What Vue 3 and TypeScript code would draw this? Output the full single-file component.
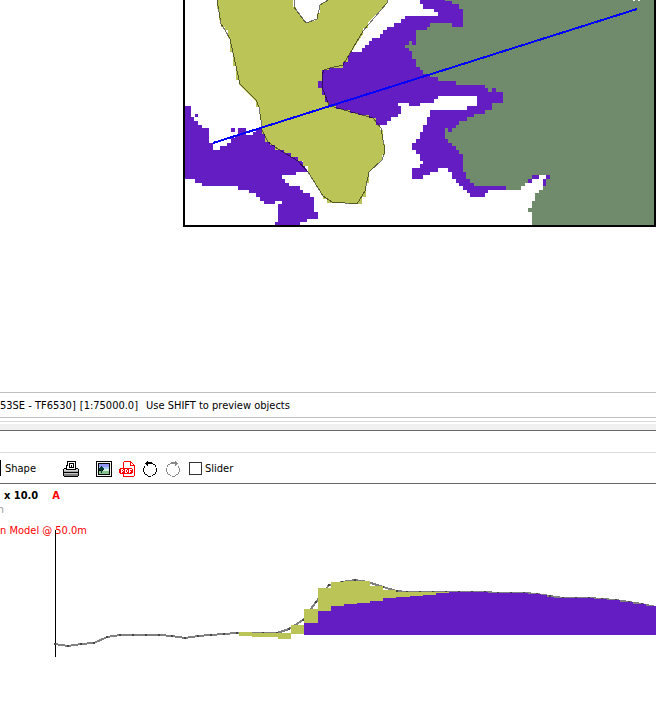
<script setup lang="ts">
import { ref } from 'vue'

type Point = [number, number]

const shape = ref(false)
const slider = ref(false)

const profile: Point[] = [
  [55, 644], [68, 646], [81, 644], [94, 643], [107, 637], [120, 635], [133, 635], [146, 635],
  [159, 635], [172, 636], [185, 638], [198, 636], [211, 635], [224, 634], [237, 633], [250, 633],
  [263, 633], [277, 633], [289, 629], [303, 620], [316, 602], [329, 585], [342, 582], [355, 580],
  [368, 582], [383, 587], [397, 591], [407, 592], [420, 592], [433, 592], [446, 592], [459, 592],
  [472, 592], [485, 592], [498, 593], [511, 593], [524, 593], [537, 594], [550, 596], [563, 598],
  [576, 598], [589, 598], [602, 599], [616, 600], [629, 602], [642, 604], [656, 607],
]
const profileLine = profile.map((p) => p.join(',')).join(' ')
</script>

<template>
  <main class="app">
    <section class="map-area">
      <div class="map-frame">
        <svg class="map" viewBox="185 0 469 225" preserveAspectRatio="xMinYMin slice" role="img" aria-label="Map">
          <g class="purple">
            <path d="M185 106H191V117H194V121H198V125H202V128H209V143H213V150H220V146H227V143H231V138H235V136H238V128H246V135H253V132H256V128H262L290 140L308 172H296V175H282V179H285V183H289V186H300V190H303V193H310V197H314V212H318V219H307V222H300V225H275V222H278V204H282V201H275V204H264V201H260V197H256V193H249V190H238V186H202V183H195V179H185Z" />
            <path d="M195 114h3v3h-3zM231 128h4v4h-4z" />
            <path d="M420 0V4H423V9H434V12H438V16H405V19H401V23H394V27H387V30H383V34H380V38H372V41H369V45H365V48H362V52H352L335 60L310 70V110L360 130L376 125H387V121H391V117H398V114H401V106H398V103H409V106H420V103H434V99H438V96H477V106H467V110H430V117H427V125H423V132H420V139H416V143H412V150H416V154H420V161H423V164H420V168H412V179H423V175H430V172H438V168H448V172H452V179H456V183H459V186H463V190H467V193H470V197H485V193H488V190H506V0Z" />
          </g>
          <path class="green" d="M445 0V1H452V4H459V9H463V27H452V23H430V27H427V30H416V45H412V41H409V45H405V48H409V51H412V59H416V67H420V70H423V74H430V77H438V81H456V85H485V88H488V92H492V88H496V92H503V103H492V110H485V114H474V117H467V121H459V125H456V128H452V132H448V128H445V139H448V143H452V146H456V150H459V154H463V172H466V179H470V183H474V186H506V190H521V186H525V183H528V179H532V175H550V179H546V186H543V190H539V193H535V201H532V208H528V212H532V225H654V0Z" />
          <path class="white" d="M633 0h2v1h-2zM638 0h2v1h-2z" />
          <path class="purple" d="M532 175h7v4h-7zM528 179h4v4h-4zM546 175h4v4h-4zM543 179h3v7h-3z" />
          <path class="olive" d="M217 0V9H219V20H221V27H225V30H228V38H230V52H233V66H236V80H239V85L256 101V107H260V120H262V134H265V142H270V145H275V150H284V153H291V157H298V161H303V166H308V172L323 196V199H327V203H340L357 204H362V197H366V183H369V172L382 160V155H385V144H383V130H380V125H376V118H369V115H358V113H350V110H343V109H336V106H329V102H325V95H322V88H318V81H322V70H329V68H343V62H348V57L363 34V28H368V23L387 3V0H328L320 5V13H317V20L306 23L296 10V7H293V0Z" />
          <g class="outline">
            <polyline points="217,0 221,24 225,30 230,39 240,84 256,100 259,107 261,120 262,130 268,142 278,149 298,161 308,172 323,196 332,202 357,204 365,191 369,172 382,160 385,151 381,128 373,118 337,108 329,105 325,95 322,87 322,75 324,70 330,68 343,65 363,31 387,3 387,0" />
            <polyline points="328,0 320,5 317,19 306,23 294,7 294,0" />
          </g>
          <path class="section-line" d="M213 143L637 9" />
        </svg>
      </div>
    </section>

    <footer class="status">
      <span class="grid-ref">53SE - TF6530]</span>
      <span class="scale">[1:75000.0]</span>
      <span>Use SHIFT to preview objects</span>
    </footer>
    <div class="splitter"></div>
    <div class="caption"></div>

    <nav class="toolbar">
      <label class="shape"><input v-model="shape" type="checkbox" /><span>Shape</span></label>
      <button class="print" type="button" aria-label="Print">
        <svg viewBox="0 0 16 16">
          <path fill="#000" d="M4 0h9v7h2v1h1v7h-1v1H1v-1H0V8h1V7h2V4h1z" />
          <path fill="#fff" d="M5 1h7v7H4V5h1z" />
          <path fill="#000" d="M6 2h5v5H6z" />
          <path fill="#fff" d="M7 3h3v3H7z" />
          <path fill="#000" d="M8 4h1v2H8z" />
          <path fill="#d4d4d4" d="M1 8h2v1h10V8h2v2H1z" />
          <path fill="#a8a8a8" d="M1 10h14v1H1z" />
          <path fill="#808080" d="M1 12h14v3H1z" />
          <path fill="#c8c8c8" d="M1 12h14v1H1z" />
        </svg>
      </button>
      <button class="picture" type="button" aria-label="Save image">
        <svg viewBox="0 0 16 16">
          <path fill="#000" d="M0 0h16v16H0z" />
          <path fill="#f4f4f0" d="M1 1h14v14H1z" />
          <path fill="#000" d="M2 2h12v12H2z" />
          <path fill="#9296f8" d="M3 3h10v4H3z" />
          <path fill="#a8ccf8" d="M3 6h10v3H3z" />
          <path fill="#d4f0e4" d="M7 8h6v2H7z" />
          <path fill="#86c48e" d="M3 10h10v3H3z" />
          <path fill="#053c35" d="M5 5h1v1h1v1h1v2H6v3H5V9H3V7h1V6h1z" />
        </svg>
      </button>
      <button class="pdf" type="button" aria-label="Export PDF">
        <svg viewBox="0 0 16 16">
          <path fill="#f00" d="M5 0h7v1h1v1h1v1h1v1h1v11h-1v1H4v-3h1v2h10V5h-4V1H5v6H4V1h1z" />
          <path fill="#fff" d="M12 2h1v1h1v1h-2z" />
          <path fill="#f00" d="M1 7h12v1h1v4h-1v1H1v-1H0V8h1z" />
          <path fill="#fff" d="M2 8h2v1h1v1H4v1H3v1H2zM6 8h2v1h1v2H8v1H6zM10 8h3v1h-2v1h1v1h-1v1h-1z" />
          <path fill="#f00" d="M3 9h1v1H3zM7 9h1v2H7z" />
        </svg>
      </button>
      <button class="undo" type="button" aria-label="Rotate left">
        <svg viewBox="0 0 16 16">
          <path fill="#000" d="M5 0h1v1h4v1h1v1H6v2H5V4H4V3H3V2h1V1h1zM11 3h2v1h-2zM13 4h1v2h-1zM14 7h1v4h-1zM13 11h1v2h-1zM11 13h2v1h-2zM10 14h1v1h-1zM6 15h3v1H6zM3 13h2v1H3zM5 14h1v1H5zM2 11h1v2H2zM1 7h1v4H1zM2 5h1v2H2z" />
        </svg>
      </button>
      <button class="redo" type="button" aria-label="Rotate right">
        <svg viewBox="0 0 16 16">
          <path fill="#888" d="M10 0h1v1h1v1h1v1h-1v1h-1v1h-1V3H5V2h1V1h4zM3 3h2v1H3zM2 4h1v2H2zM1 7h1v4H1zM2 11h1v2H2zM3 13h2v1H3zM5 14h1v1H5zM7 15h3v1H7zM11 13h2v1h-2zM10 14h1v1h-1zM13 11h1v2h-1zM14 7h1v4h-1zM13 5h1v2h-1z" />
        </svg>
      </button>
      <label class="slider"><input v-model="slider" type="checkbox" /><span>Slider</span></label>
    </nav>

    <section class="section-view">
      <svg class="chart" viewBox="0 484 656 231" preserveAspectRatio="xMinYMin slice" role="img" aria-label="Cross section">
        <path class="axis" d="M55 530h1v127h-1z" />
        <polyline class="ground" :points="profileLine" />
        <rect v-for="(p, i) in profile" :key="i" class="node" :x="p[0] - 1" :y="p[1] - 1" width="2" height="2" />
        <path class="olive" d="M239 632H252V633H291V625H304V609H318V588H331V582H344V581H370V586H383V590H396V592H449V635H304V634H291V639H278V637H252V636H239Z" />
        <path class="purple" d="M304 635V623H318V611H331V606H344V604H357V603H370V601H383V598H396V597H410V596H423V595H436V593H449V592H488V593H528V594H541V595H547V597H554V598H594V599H607V600H620V602H633V604H646V606H656V635Z" />
      </svg>
      <div class="labels">
        <p class="title"><span class="scale-factor">x 10.0</span><span class="marker">A</span></p>
        <p class="unit"><span>m</span></p>
        <p class="model">n Model @ 50.0m</p>
      </div>
    </section>
  </main>
</template>

<style>
body {
  background: #fff;
}
</style>

<style scoped>
.app {
  display: flex;
  flex-direction: column;
  font-family: "DejaVu Sans Condensed", "DejaVu Sans", sans-serif;
  font-size: 11px;
  line-height: 14px;
  color: #000;
  overflow: hidden;
}
svg {
  display: block;
  shape-rendering: crispEdges;
}
.map-area {
  padding: 0 0 165px 183px;
}
.map-frame {
  border: solid #000;
  border-width: 0 2px 2px;
}
.map {
  width: 100%;
}
.purple { fill: #641cc3; }
.green { fill: #708b6b; }
.olive { fill: #bbc456; }
.white { fill: #fff; }
.outline {
  fill: none;
  stroke: #000;
  stroke-opacity: 0.55;
  stroke-width: 1;
}
.section-line {
  stroke: #00f;
  stroke-width: 2;
}
.status {
  display: flex;
  align-items: center;
  height: 22px;
  padding-top: 2px;
  border: solid #c0c0c0;
  border-width: 1px 0;
  white-space: nowrap;
}
.scale {
  margin: 0 8px 0 4px;
}
.splitter {
  height: 6px;
  margin-top: 3px;
  padding-top: 2px;
  border-top: 1px solid #d9d9d9;
  border-bottom: 1px solid #696969;
  background: #f0f0f0 content-box;
}
.caption {
  height: 21px;
  border-bottom: 1px solid #dcdcdc;
}
.toolbar {
  display: flex;
  align-items: center;
  height: 30px;
  border-bottom: 1px solid #696969;
}
.toolbar label {
  display: flex;
  align-items: center;
}
.toolbar label span {
  padding-top: 2px;
}
.toolbar input {
  appearance: none;
  box-sizing: border-box;
  width: 13px;
  height: 13px;
  margin: 0;
  border: 1px solid #333;
  background: #fff;
}
.toolbar button {
  flex: none;
  width: 16px;
  height: 16px;
  margin: 1px 7px 0 0;
  padding: 0;
  border: 0;
  background: none;
}
.toolbar .shape {
  width: 63px;
  gap: 4px;
}
.shape input {
  height: 16px;
  margin-left: -12px;
  border-color: #000;
}
.toolbar .print {
  margin-right: 17px;
}
.toolbar .slider {
  gap: 3px;
  margin-left: 1px;
}
.section-view {
  display: grid;
}
.chart,
.labels {
  grid-area: 1 / 1;
}
.chart {
  width: 100%;
}
.axis { fill: #000; }
.ground {
  fill: none;
  stroke: #808080;
  stroke-width: 2;
}
.node { fill: #444; }
.labels {
  display: flex;
  flex-direction: column;
  align-items: flex-start;
  padding-top: 5px;
}
.labels p {
  display: flex;
  margin: 0;
  white-space: nowrap;
}
.title {
  font-weight: bold;
}
.scale-factor {
  padding-left: 4px;
}
.marker {
  margin-left: 14px;
  color: #f00;
}
.unit {
  color: #999;
}
.unit span {
  display: flex;
  justify-content: flex-end;
  width: 4px;
  overflow: hidden;
}
.labels .model {
  margin-top: 7px;
  color: #f00;
}
</style>
